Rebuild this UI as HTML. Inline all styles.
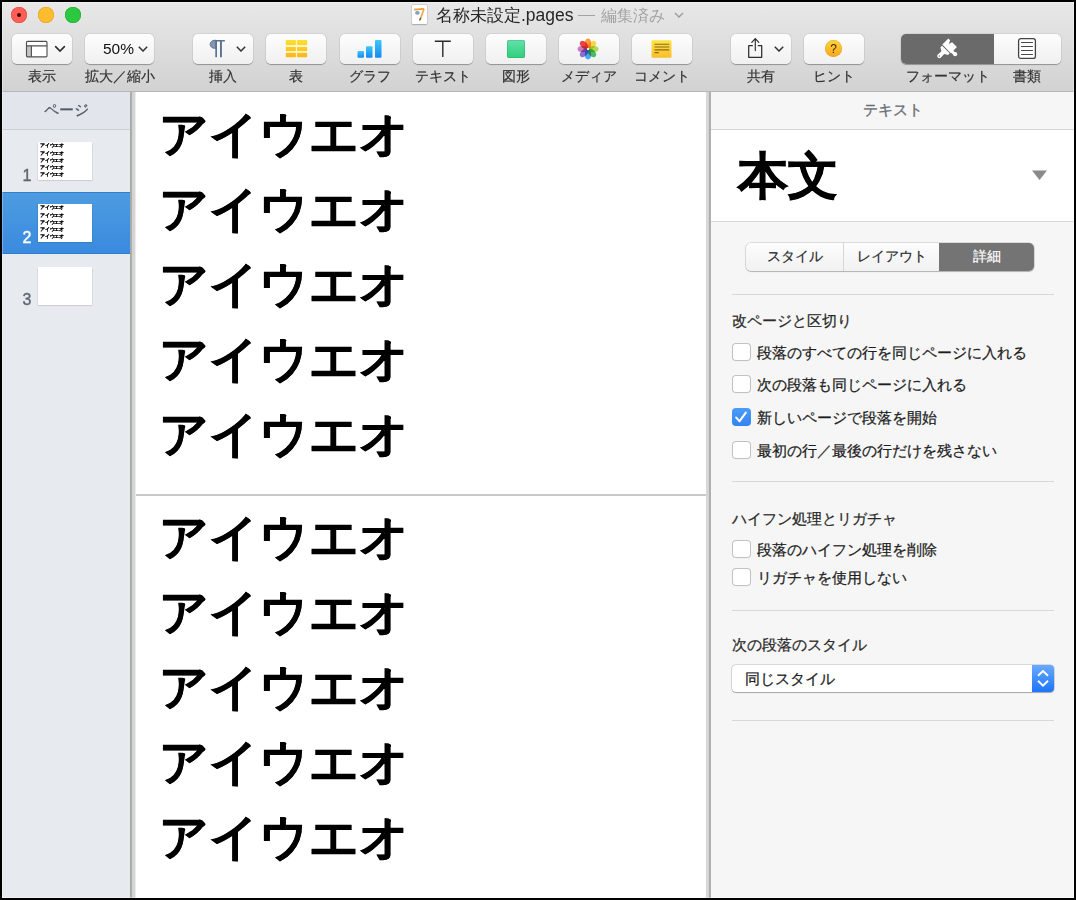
<!DOCTYPE html>
<html lang="ja">
<head>
<meta charset="utf-8">
<style>
*{box-sizing:border-box;margin:0;padding:0}
html,body{width:1076px;height:900px;overflow:hidden;background:#000;font-family:"Liberation Sans",sans-serif;position:relative}
body>div,.a{position:absolute}
#win{left:2px;top:2px;width:1072px;height:896px;background:#fff}
#ovl{left:2px;top:2px;width:1072px;height:896px;box-shadow:inset 0 0 0 1px rgba(255,255,255,.3);pointer-events:none}
#tb{left:2px;top:2px;width:1072px;height:90px;background:linear-gradient(#e8e8e8,#d2d2d2);border-bottom:1px solid #b6b6b6}
.light{position:absolute;top:7px;width:16px;height:16px;border-radius:50%}
.btn{position:absolute;top:33.6px;height:30px;width:60px;border-radius:5px;background:linear-gradient(#fdfdfd,#f0f0f0);box-shadow:0 0.5px 1px rgba(0,0,0,.3),0 0 0 0.5px rgba(0,0,0,.07)}
.lbl{position:absolute;top:68px;height:16px;font-size:14px;line-height:16px;color:#333;-webkit-text-stroke:.2px #333;text-align:center;white-space:nowrap}

.row{position:absolute;left:23px;height:60px;font-size:48.5px;line-height:60px;font-weight:bold;color:#000;white-space:nowrap;-webkit-text-stroke:.5px #000}
.num{font-size:16px;line-height:16px;width:16px;text-align:center;-webkit-text-stroke:.35px currentColor}
.thumb .row{-webkit-text-stroke:2px #000;color:#000}
.thumb{width:54px;height:38px;background:#fff;overflow:hidden;box-shadow:0 .5px 1.5px rgba(0,0,0,.3)}
.seg{top:245px;height:22px;font-size:14px;line-height:22px;text-align:center;color:#2a2a2a;white-space:nowrap;-webkit-text-stroke:.2px currentColor}
.hr{left:732px;width:322px;height:1px;background:#d8d8d8}
.hd{left:732px;height:20px;font-size:15px;line-height:20px;color:#2a2a2a;white-space:nowrap;-webkit-text-stroke:.25px #2a2a2a}
.cb{left:732.2px;width:18.6px;height:18.6px;margin-top:-.5px;border-radius:4px;background:#fff;box-shadow:inset 0 0 0 1px #c2c2c2,0 .3px .6px rgba(0,0,0,.08)}
.cb.on{background:linear-gradient(#4b9cf9,#3482f0);box-shadow:none}
.ct{left:757px;margin-top:1px;height:18px;font-size:15px;line-height:18px;color:#1e1e1e;white-space:nowrap;-webkit-text-stroke:.25px #1e1e1e}
</style>
</head>
<body>
<div id="win"></div>
<div id="tb"></div>
<div class="light" style="left:11px;background:#fd5f57;box-shadow:inset 0 0 0 .5px #e2463f"><div style="position:absolute;left:6px;top:6px;width:4px;height:4px;border-radius:50%;background:#4d0000"></div></div>
<div class="light" style="left:38px;background:#febc2e;box-shadow:inset 0 0 0 .5px #e1a116"></div>
<div class="light" style="left:65px;background:#2bc840;box-shadow:inset 0 0 0 .5px #1aab29"></div>

<!-- toolbar buttons -->
<div class="btn" style="left:12px"></div>
<div class="btn" style="left:85px;width:69px"></div>
<div class="btn" style="left:193px"></div>
<div class="btn" style="left:266px"></div>
<div class="btn" style="left:340px"></div>
<div class="btn" style="left:413px"></div>
<div class="btn" style="left:486px"></div>
<div class="btn" style="left:559px"></div>
<div class="btn" style="left:632px"></div>
<div class="btn" style="left:731px"></div>
<div class="btn" style="left:804px"></div>
<div class="btn" style="left:901px;width:160px"></div>

<div class="lbl" style="left:12px;width:60px">表示</div>
<div class="lbl" style="left:79px;width:81px">拡大／縮小</div>
<div class="lbl" style="left:193px;width:60px">挿入</div>
<div class="lbl" style="left:266px;width:60px">表</div>
<div class="lbl" style="left:340px;width:60px">グラフ</div>
<div class="lbl" style="left:403px;width:80px">テキスト</div>
<div class="lbl" style="left:486px;width:60px">図形</div>
<div class="lbl" style="left:549px;width:80px">メディア</div>
<div class="lbl" style="left:622px;width:80px">コメント</div>
<div class="lbl" style="left:731px;width:60px">共有</div>
<div class="lbl" style="left:794px;width:80px">ヒント</div>
<div class="lbl" style="left:898px;width:100px">フォーマット</div>
<div class="lbl" style="left:997px;width:60px">書類</div>


<!-- title -->
<div class="a" style="left:412px;top:5px;width:15px;height:19px;background:#fff;border-radius:1px;box-shadow:0 0 0 .5px rgba(0,0,0,.12),0 .5px 1.5px rgba(0,0,0,.22)">
<svg width="15" height="19" viewBox="0 0 15 19" style="position:absolute;left:0;top:0"><path d="M2.2 4.6 L12 3.8" stroke="#f49a2a" stroke-width="1.8" fill="none"/><path d="M12 3.8 L8.2 14.6" stroke="#f0a848" stroke-width="1.7" fill="none"/><path d="M8.6 13 L7.6 15.6" stroke="#444" stroke-width="1.2"/><ellipse cx="5.4" cy="7.9" rx="2.3" ry="1.8" fill="#5ea6e6"/><path d="M5.3 6.6 V9.2" stroke="#f09020" stroke-width=".9"/></svg>
</div>
<div class="a" id="t1" style="left:436px;top:5px;height:20px;font-size:16.8px;line-height:20px;color:#262626;white-space:nowrap">名称未設定<span style="font-size:17.5px">.pages</span></div>
<div class="a" style="left:578px;top:15px;width:17px;height:1.3px;background:#a3a3a3"></div>
<div class="a" id="t2" style="left:601px;top:6px;height:20px;font-size:16px;line-height:20px;color:#a3a3a3;white-space:nowrap">編集済み</div>
<svg class="a" style="left:674px;top:12px" width="10" height="6" viewBox="0 0 10 6"><path d="M1 1 L5 5 L9 1" stroke="#9a9a9a" stroke-width="1.3" fill="none"/></svg>

<!-- icons -->
<svg class="a" style="left:25px;top:40px" width="23" height="18" viewBox="0 0 23 18"><rect x="1.5" y="1.4" width="20.5" height="15.4" rx="1" fill="#fff"/><rect x="1.5" y="5.8" width="4.9" height="11" fill="#c4c4c4"/><rect x="1.5" y="1.4" width="20.5" height="15.4" rx="1" fill="none" stroke="#505050" stroke-width="1.15"/><path d="M1.5 5.9 H22 M6.4 5.9 V16.8" stroke="#505050" stroke-width="1.15"/></svg>
<svg class="a chev" style="left:54px;top:45px" width="12" height="8" viewBox="0 0 12 8"><path d="M1.6 1.6 L6 6 L10.4 1.6" stroke="#2e2e2e" stroke-width="1.6" fill="none" stroke-linecap="round"/></svg>
<div class="a" style="left:103px;top:41px;font-size:15.5px;line-height:16px;color:#111;white-space:nowrap">50%</div>
<svg class="a chev" style="left:138px;top:46px" width="10" height="6" viewBox="0 0 10 6"><path d="M.8 .8 L5 5 L9.2 .8" stroke="#333" stroke-width="1.5" fill="none"/></svg>

<svg class="a" style="left:209px;top:39px" width="17" height="20" viewBox="0 0 17 20"><path d="M7 1.3 V9.3 H5.6 A4.5 4 0 0 1 5.6 1.3Z" fill="#8497ae" stroke="#5b7290" stroke-width=".9"/><path d="M5.6 .9 H15.2 A.85 .85 0 0 1 15.2 2.6 H12.9 V18.2 H11 V2.6 H8 V18.2 H6.3 V2.6 H5.6Z" fill="#5b7290"/></svg>
<svg class="a chev" style="left:236px;top:46px" width="10" height="6" viewBox="0 0 10 6"><path d="M.8 .8 L5 5 L9.2 .8" stroke="#333" stroke-width="1.5" fill="none"/></svg>

<svg class="a" style="left:285px;top:39px" width="23" height="19" viewBox="0 0 23 19"><defs><linearGradient id="gy" x1="0" y1="0" x2="0" y2="19" gradientUnits="userSpaceOnUse"><stop offset="0" stop-color="#fde22e"/><stop offset="1" stop-color="#fbb31f"/></linearGradient></defs><rect x=".8" y=".9" width="21.4" height="17.4" rx="1" fill="#fff6c4"/><g fill="url(#gy)"><rect x=".8" y=".9" width="10.1" height="5" rx=".8"/><rect x="12.1" y=".9" width="10.1" height="5" rx=".8"/><rect x=".8" y="7.9" width="10.1" height="4" rx=".3"/><rect x="12.1" y="7.9" width="10.1" height="4" rx=".3"/><rect x=".8" y="13.8" width="10.1" height="4.5" rx=".8"/><rect x="12.1" y="13.8" width="10.1" height="4.5" rx=".8"/></g></svg>

<svg class="a" style="left:357px;top:40px" width="25" height="18" viewBox="0 0 25 18"><defs><linearGradient id="gb" x1="0" y1="0" x2="0" y2="1"><stop offset="0" stop-color="#3cc8fa"/><stop offset="1" stop-color="#1688ef"/></linearGradient></defs><rect x=".5" y="11" width="6.5" height="6.8" rx="1" fill="url(#gb)"/><rect x="9" y="6.2" width="6.5" height="11.6" rx="1" fill="url(#gb)"/><rect x="18" y="0" width="6.5" height="17.8" rx="1" fill="url(#gb)"/></svg>

<svg class="a" style="left:434px;top:40px" width="18" height="18" viewBox="0 0 18 18"><path d="M.8 1.3 H16.8 M8.8 1.3 V17" stroke="#2b2b2b" stroke-width="1.4" fill="none"/></svg>

<div class="a" style="left:507px;top:40px;width:17.5px;height:17.5px;border-radius:2px;background:linear-gradient(#63e0ad,#30cf79);box-shadow:inset 0 0 0 .6px rgba(20,150,80,.5)"></div>

<svg class="a" style="left:577px;top:38px" width="22" height="22" viewBox="-11 -11 22 22"><g opacity=".9" style="isolation:isolate"><ellipse cx="0" cy="-5.6" rx="3.1" ry="4.9" fill="#f8922a" transform="rotate(0)" style="mix-blend-mode:multiply"/><ellipse cx="0" cy="-5.6" rx="3.1" ry="4.9" fill="#fcd234" transform="rotate(45)" style="mix-blend-mode:multiply"/><ellipse cx="0" cy="-5.6" rx="3.1" ry="4.9" fill="#a6d83e" transform="rotate(90)" style="mix-blend-mode:multiply"/><ellipse cx="0" cy="-5.6" rx="3.1" ry="4.9" fill="#36b65a" transform="rotate(135)" style="mix-blend-mode:multiply"/><ellipse cx="0" cy="-5.6" rx="3.1" ry="4.9" fill="#3d9cf0" transform="rotate(180)" style="mix-blend-mode:multiply"/><ellipse cx="0" cy="-5.6" rx="3.1" ry="4.9" fill="#7d62c6" transform="rotate(225)" style="mix-blend-mode:multiply"/><ellipse cx="0" cy="-5.6" rx="3.1" ry="4.9" fill="#c86cc0" transform="rotate(270)" style="mix-blend-mode:multiply"/><ellipse cx="0" cy="-5.6" rx="3.1" ry="4.9" fill="#ee2e2e" transform="rotate(315)" style="mix-blend-mode:multiply"/></g><circle r="1" fill="#fff"/></svg>

<svg class="a" style="left:651px;top:40px" width="21" height="18" viewBox="0 0 21 18"><defs><linearGradient id="gc" x1="0" y1="0" x2="0" y2="1"><stop offset="0" stop-color="#fde548"/><stop offset="1" stop-color="#fbbd2a"/></linearGradient></defs><rect x=".5" y=".2" width="20" height="17.5" rx="1.2" fill="url(#gc)"/><path d="M3.5 4.2 H18.2 M3.5 7 H18.2 M3.5 9.9 H18.2 M3.5 12.6 H7.8" stroke="#8a6a1a" stroke-width="1.1"/></svg>

<svg class="a" style="left:746px;top:36px" width="18" height="23" viewBox="0 0 18 23"><path d="M6.8 9.7 H2.7 V21.3 H15.7 V9.7 H11.8" stroke="#2e2e2e" stroke-width="1.25" fill="none" stroke-linejoin="round"/><path d="M9.3 14.6 V2.6 M5.8 6.4 L9.3 2.5 L12.8 6.4" stroke="#2e2e2e" stroke-width="1.15" fill="none" stroke-linecap="round"/></svg>
<svg class="a chev" style="left:774px;top:46px" width="10" height="6" viewBox="0 0 10 6"><path d="M.8 .8 L5 5 L9.2 .8" stroke="#333" stroke-width="1.5" fill="none"/></svg>

<div class="a" style="left:825px;top:40px;width:17px;height:17px;border-radius:50%;background:linear-gradient(#ffd53a,#f8a51e);box-shadow:inset 0 0 0 .5px rgba(200,120,0,.4)"></div>
<div class="a" style="left:825px;top:41px;width:17px;height:16px;font-size:12px;line-height:16px;text-align:center;color:#3a2a00">?</div>

<div class="a" style="left:901px;top:33.6px;width:93px;height:30px;border-radius:5px 0 0 5px;background:#6a6a6a"></div>
<svg class="a" style="left:925px;top:34px" width="45" height="30" viewBox="-21.8 -14.6 45 30"><g transform="rotate(45)"><path fill="#fff" d="M-6 0.3 V-8.2 H-3.5 L-1.9 -4.7 L-0.7 -8.2 H6.1 V0.3Z"/><path fill="#fff" d="M-5.4 1.3 H5.4 V3.6 L2 5.6 V10.5 A2.2 2.2 0 0 1 -2 10.5 V5.6 L-5.4 3.6Z"/><circle cx="0" cy="10.5" r="2.2" fill="#fff"/><circle cx="0" cy="10.6" r=".7" fill="#6a6a6a"/></g><path d="M5.2 3 L7.9 5.2" stroke="#fff" stroke-width="3" stroke-linecap="round"/><circle cx="8.3" cy="5.6" r="2.1" fill="#fff"/></svg>
<svg class="a" style="left:1017px;top:37px" width="20" height="23" viewBox="0 0 20 23"><rect x="1.6" y="1.6" width="16.8" height="19.8" rx="2.2" fill="#fff" stroke="#444" stroke-width="1.3"/><path d="M4.5 5.5 H15.5 M4.5 9.5 H15.5 M4.5 13.5 H15.5 M4.5 17.5 H15.5" stroke="#4a4a4a" stroke-width="1.1" stroke-linecap="round"/></svg>


<!-- sidebar -->
<div class="a" style="left:2px;top:92px;width:128px;height:806px;background:#e7eaef"></div>
<div class="a" style="left:2px;top:92px;width:128px;height:38px;background:#e2e6ec;border-bottom:1px solid #cbd0d7"></div>
<div class="a" style="left:2px;top:101px;width:128px;height:18px;font-size:14.5px;line-height:18px;color:#4e5765;text-align:center;-webkit-text-stroke:.25px #4e5765">ページ</div>
<div class="a" style="left:2px;top:192px;width:128px;height:62px;background:linear-gradient(#4d9ce0,#3a8adf);border-top:1px solid #2f7fd0;border-bottom:1px solid #2f7fd0"></div>
<div class="a num" style="left:19px;top:168px;color:#5c6572">1</div>
<div class="a num" style="left:19px;top:230px;color:#fff">2</div>
<div class="a num" style="left:19px;top:292px;color:#5c6572">3</div>
<div class="a thumb" style="left:38px;top:142px"><div style="position:absolute;left:0;top:0;width:570px;height:401px;transform:scale(0.0947);transform-origin:0 0"><div class="row" style="top:11px;">アイウエオ</div><div class="row" style="top:86px;">アイウエオ</div><div class="row" style="top:161px;">アイウエオ</div><div class="row" style="top:236px;">アイウエオ</div><div class="row" style="top:311px;">アイウエオ</div></div></div>
<div class="a thumb" style="left:38px;top:204px"><div style="position:absolute;left:0;top:0;width:570px;height:401px;transform:scale(0.0947);transform-origin:0 0"><div class="row" style="top:11px;">アイウエオ</div><div class="row" style="top:86px;">アイウエオ</div><div class="row" style="top:161px;">アイウエオ</div><div class="row" style="top:236px;">アイウエオ</div><div class="row" style="top:311px;">アイウエオ</div></div></div>
<div class="a thumb" style="left:38px;top:267px"></div>
<!-- sidebar divider -->
<div class="a" style="left:130px;top:92px;width:6px;height:806px;background:linear-gradient(90deg,#a6a6a6 0,#b0b0b0 2px,#d2d2d2 2px,#d6d6d6 5px,#ececec 5px,#ececec 6px)"></div>

<!-- document -->
<div class="a" style="left:136px;top:92px;width:570px;height:806px;background:#fff"></div>
<div class="a" style="left:136px;top:494px;width:570px;height:2px;background:#c9c9c9"></div>
<div class="a" style="left:136px;top:93px;width:570px;height:401px"><div class="row" style="top:11px;">アイウエオ</div><div class="row" style="top:86px;">アイウエオ</div><div class="row" style="top:161px;">アイウエオ</div><div class="row" style="top:236px;">アイウエオ</div><div class="row" style="top:311px;">アイウエオ</div></div>
<div class="a" style="left:136px;top:496px;width:570px;height:401px"><div class="row" style="top:11px;">アイウエオ</div><div class="row" style="top:86px;">アイウエオ</div><div class="row" style="top:161px;">アイウエオ</div><div class="row" style="top:236px;">アイウエオ</div><div class="row" style="top:311px;">アイウエオ</div></div>
<div class="a" style="left:706px;top:92px;width:5px;height:806px;background:linear-gradient(90deg,#d9d9d9 0,#d3d3d3 3px,#ababab 3px,#b3b3b3 5px)"></div>

<!-- inspector -->
<div class="a" style="left:711px;top:92px;width:363px;height:806px;background:#f6f6f6"></div>
<div class="a" style="left:711px;top:92px;width:363px;height:38px;background:#f6f6f6;border-bottom:1px solid #d5d5d5"></div>
<div class="a" style="left:711px;top:101px;width:363px;height:18px;font-size:15px;line-height:18px;color:#6a6e73;text-align:center;-webkit-text-stroke:.3px #6a6e73">テキスト</div>
<div class="a" style="left:711px;top:130px;width:363px;height:92px;background:#fff;border-bottom:1px solid #d9d9d9"></div>
<div class="a" style="left:738px;top:145.5px;font-size:50px;line-height:60px;font-weight:bold;color:#000;white-space:nowrap;-webkit-text-stroke:.8px #000">本文</div>
<svg class="a" style="left:1032px;top:170px" width="16" height="11" viewBox="0 0 16 11"><path d="M0 0.5 H15 L7.5 10Z" fill="#8a8a8a"/></svg>

<div class="a" style="left:746px;top:243px;width:288px;height:28px;border-radius:5px;background:linear-gradient(#fdfdfd,#f1f1f1);box-shadow:0 0 0 .6px rgba(0,0,0,.18),0 .6px 1px rgba(0,0,0,.2)"></div>
<div class="a" style="left:843px;top:243px;width:1px;height:28px;background:#d6d6d6"></div>
<div class="a" style="left:939px;top:243px;width:95px;height:28px;border-radius:0 5px 5px 0;background:#747474"></div>
<div class="a seg" style="left:746px;width:97px">スタイル</div>
<div class="a seg" style="left:844px;width:95px">レイアウト</div>
<div class="a seg" style="left:939px;width:95px;color:#fff">詳細</div>

<div class="a hr" style="top:294px"></div>
<div class="a hd" style="top:311px">改ページと区切り</div>
<div class="a cb" style="top:343px"></div><div class="a ct" style="top:343px">段落のすべての行を同じページに入れる</div>
<div class="a cb" style="top:375px"></div><div class="a ct" style="top:375px">次の段落も同じページに入れる</div>
<div class="a cb on" style="top:408px"><svg width="18" height="18" viewBox="0 0 18 18" style="position:absolute;left:0;top:0"><path d="M4.2 9.6 L7.6 13.2 L13.8 4.6" stroke="#fff" stroke-width="2" fill="none" stroke-linecap="round" stroke-linejoin="round"/></svg></div><div class="a ct" style="top:408px">新しいページで段落を開始</div>
<div class="a cb" style="top:441px"></div><div class="a ct" style="top:441px">最初の行／最後の行だけを残さない</div>
<div class="a hr" style="top:481px"></div>
<div class="a hd" style="top:509px">ハイフン処理とリガチャ</div>
<div class="a cb" style="top:540px"></div><div class="a ct" style="top:540px">段落のハイフン処理を削除</div>
<div class="a cb" style="top:568px"></div><div class="a ct" style="top:568px">リガチャを使用しない</div>
<div class="a hr" style="top:610px"></div>
<div class="a hd" style="top:635px">次の段落のスタイル</div>
<div class="a" style="left:732px;top:665px;width:322px;height:27px;border-radius:4px;background:#fff;box-shadow:0 0 0 .6px rgba(0,0,0,.2),0 .6px 1px rgba(0,0,0,.25)"></div>
<div class="a" style="left:745px;top:669px;font-size:15px;line-height:19px;color:#222;white-space:nowrap;-webkit-text-stroke:.25px #222">同じスタイル</div>
<div class="a" style="left:1032px;top:665px;width:22px;height:27px;border-radius:0 4px 4px 0;background:linear-gradient(#68aaff,#1c74f7)"></div>
<svg class="a" style="left:1032px;top:665px" width="22" height="27" viewBox="0 0 22 27"><path d="M6 10.8 L11 6 L16 10.8 M6 15.8 L11 20.6 L16 15.8" stroke="#fff" stroke-width="1.9" fill="none"/></svg>
<div class="a hr" style="top:720px"></div>

<div id="ovl"></div>
</body>
</html>
